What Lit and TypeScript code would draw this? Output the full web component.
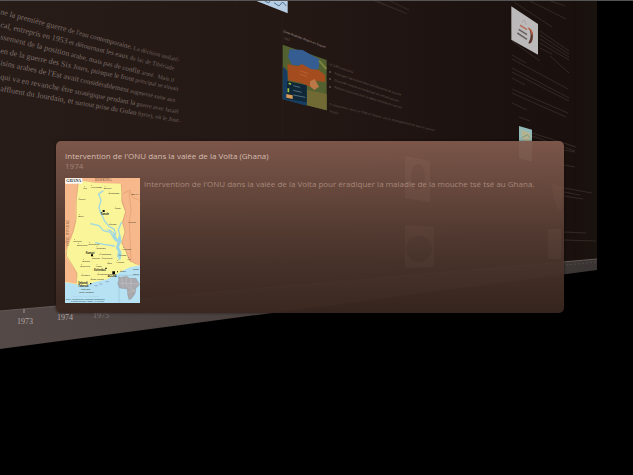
import { LitElement, html, svg, css } from "lit";
import { customElement } from "lit/decorators.js";

/* Article lines on the wall; each line shrinks as it recedes. */
const article: { y: number; angle: number; parts: [string, string, string] }[] = [
  { y: 14, angle: 15, parts: ["ne la première guerre", " de l'eau contemporaine.", " La décision unilaté-"] },
  { y: 27, angle: 14, parts: ["cal, entrepris en 1953", " et détournant les eaux", " du lac de Tibériade"] },
  { y: 39, angle: 14, parts: ["ssement de la position", " arabe, mais pas de conflit", " armé.  Mais il"] },
  { y: 53, angle: 12, parts: ["en de la guerre des Six", " Jours, puisque le front", " principal se situait"] },
  { y: 65, angle: 12, parts: ["isins arabes de l'Est avait", " considérablement", " augmenté suite aux"] },
  { y: 79, angle: 11, parts: ["qui va en revanche être", " stratégique pendant la", " guerre avec Israël"] },
  { y: 91, angle: 10, parts: ["affluent du Jourdain, et", " surtout prise du Golan", " Syrie), où le Jour-"] },
];

/* Small notes further along the wall: x, y, angle, text. */
const notes: [number, number, number, string][] = [
  [329, 65, 19, "Le GAP en Anatolie"],
  [334, 74, 18, "Aménager l'agriculture dans une économie de marché"],
  [334, 81, 18, "Diversifier l'emploi et moderniser les infrastructures"],
  [334, 88, 17, "Réduire la pauvreté dans la région Anatolie du sud-est"],
  [329, 105, 14, "Ce programme, lancé en 1982 en Turquie, vise le développement de tout le sud-est"],
  [329, 112, 14, "Turquie"],
];

/* Lines of text too distant to read: x1, y1, x2, y2. */
const distant: [number, number, number, number][] = [
  [375, 0, 407, 14], [388, 0, 409, 10], [372, 0, 403, 12],
  [514, 2, 552, 27], [528, 0, 566, 19], [548, 0, 565, 6],
  [540, 31, 569, 51], [540, 35, 569, 54], [540, 39, 569, 57], [540, 43, 569, 60],
  [540, 48, 552, 54], [512, 41, 540, 61], [550, 56, 569, 73],
  [512, 55, 526, 63], [512, 59, 568, 89], [512, 68, 569, 98], [512, 72, 569, 101],
  [512, 78, 525, 85], [512, 89, 568, 113], [512, 93, 566, 117], [512, 103, 527, 110],
  [519, 117, 530, 121], [532, 133, 576, 147], [532, 136, 575, 151],
  [564, 143, 575, 147], [564, 150, 575, 152], [564, 165, 575, 167],
  [564, 188, 592, 193], [564, 192, 580, 195], [564, 196, 583, 199],
  [564, 232, 586, 233], [564, 240, 596, 241],
];

/* Place names on the map of Ghana. */
const towns: [number, number, string][] = [
  [72, 50, "Wa"], [94, 47, "Navrongo"], [134, 49, "Bawku"], [148, 66, "Gambaga"],
  [58, 84, "Lawra"], [58, 133, "Bole"], [166, 111, "Yendi"], [150, 159, "Salaga"],
  [42, 209, "Wenchi"], [54, 221, "Berekum"], [88, 218, "Techiman"], [110, 229, "Atebubu"],
  [120, 249, "Mampong"], [126, 261, "Nkawkaw"], [190, 233, "Kpandu"], [204, 262, "Ho"],
  [144, 276, "Oda"], [70, 269, "Bibiani"], [98, 260, "Obuasi"], [64, 284, "Dunkwa"],
  [172, 272, "Hohoe"], [182, 300, "Tema"], [66, 312, "Prestea"], [94, 324, "Cape Coast"],
  [114, 309, "Winneba"], [110, 284, "Kade"], [178, 252, "Anloga"],
];

const ghana = () => svg`
  <svg class="map" viewBox="18 17 225 375" role="img" aria-label="Carte du Ghana">
    <rect x="18" y="17" width="225" height="375" fill="#f7b98b" />
    <path d="M58 36 L74 26 L110 32 L186 34 L190 62 L187 88 L199 118 L190 148 L198 178 L188 212 L199 232 L210 262 L231 275 L243 281 V392 H18 V320 L42 315 L20 262 L18 240 L38 196 L50 150 L50 90 Z" fill="#fbf59a" />
    <path d="M18 330 L44 334 L78 342 L104 330 L145 321 L172 307 L190 295 L213 285 L243 279 V392 H18Z" fill="#b7e2f4" />
    <path d="M18 228 L22 255 L42 283 L54 303 L50 334 L18 328Z" fill="#f7b98b" />
    <path d="M57 36 L52 82 L51 142 L42 180 L26 205 L22 250 L41 280 L54 303 L52 334" fill="none" stroke="#d69a70" stroke-width="2" />
    <path d="M187 35 L189 85 L200 118 L191 150 L198 179 L188 211 L200 234 L211 264 L233 276" fill="none" stroke="#d69a70" stroke-width="2" />
    <path d="M190 65 L213 53 L221 76 L243 84 M210 58 L216 116 L211 148 L216 270" fill="none" stroke="#e29c6d" stroke-width="2" />
    <path d="M133 55 L119 65 L126 84 L120 104 L126 127 M94 154 L120 160 L133 175 L155 180 L164 198 L178 206 L174 229 L186 245 L179 264 M124 116 L136 145 L151 163 L165 170 L171 187 M188 149 L178 172 L185 199 M108 211 L135 216 L167 221" fill="none" stroke="#9fd8e2" stroke-width="4" />
    <path d="M139 171 L160 180 L165 203 L177 211 L170 224 L177 237 L174 253 L185 262 L187 239 L180 224 L188 205 L181 187 L175 201 L167 183 L154 172Z" fill="#9fd8e2" />
    <g class="place">
      ${towns.map(([x, y, t]) => svg`<text x=${x} y=${y}>${t}</text><circle cx=${x + 4} cy=${y - 7} r="1" />`)}
      <text class="city" x="125" y="127">Tamale</text>
      <text class="city" x="80" y="244">Kumasi</text>
      <text class="city" x="146" y="314">ACCRA</text>
      <text class="city" x="105" y="297">Koforidua</text>
      <text class="city" x="58" y="334">Sekondi</text>
      <text class="city" x="58" y="343">Takoradi</text>
      <text x="66" y="353">Cap des</text><text x="60" y="362">Trois Pointes</text>
      <text x="217" y="67">BENIN</text><text x="208" y="152">TOGO</text>
      <text x="221" y="292">Lomé</text><text x="221" y="309">Golfe</text>
    </g>
    <path d="M131 113h6v6h-6z M96 246h6v6h-6z M160 297h8v8h-8z M139 286h4v4h-4z M93 332h4v4h-4z M174 297h3v3h-3z" />
    <path d="M178 314 L185 315 L203 312 L212 318 L231 318 L242 337 L231 347 L228 364 L217 379 L210 382 L206 367 L205 350 L182 347 L176 334 L180 322Z" fill="#aaa9ad" stroke="#858991" />
    <path d="M188 314 L192 346 M202 312 L201 337 L213 347 M215 318 L217 350 L228 359 M179 332 L241 335 M206 362 L228 352" fill="none" stroke="#d4d4d4" />
    <path d="M180 392 V309 H243" fill="none" stroke="#80aabc" />
    <path d="M106 340h10 M121 335h9 M140 328h10" stroke="#547" />
    <rect x="19" y="18" width="51" height="16" fill="#fff" />
    <text class="name" x="22" y="30">GHANA</text>
    <text class="country" x="108" y="27">BURKINA</text>
    <text class="country" transform="translate(29 221) rotate(-90)">CÔTE D'IVOIRE</text>
    <text class="sea" x="42" y="373">OCÉAN ATLANTIQUE</text>
    <text class="foot" x="20" y="382">Source : Département de l'information cartographique</text>
    <text class="foot" x="35" y="389">Le monde des cartes : Ghana — 1:4 000 000</text>
  </svg>`;

@customElement("wall-scene")
class WallScene extends LitElement {
  static styles = css`
    :host { display: block; }
    .scene { display: block; width: 100%; height: 100%; }
    .article { font: 8px "Liberation Serif", serif; fill: #7d6f69; white-space: pre; }
    .mid { font-size: 7px; }
    .far { font-size: 6px; fill: #71645e; }
    .heading { font: 3px Lato, sans-serif; fill: #a89c96; }
    .note { font: 3px Lato, sans-serif; fill: #62554f; }
    .distant { stroke: #332824; stroke-width: 1; }
    .year { font: 8px "Liberation Serif", serif; fill: #b5aaa7; }
  `;

  render() {
    return html`
      <svg class="scene" viewBox="0 0 633 475" preserveAspectRatio="xMinYMin slice">
        <defs>
          <linearGradient id="wall">
            <stop offset="0" stop-color="#281c18" />
            <stop offset=".5" stop-color="#241815" />
            <stop offset=".85" stop-color="#1b110f" />
            <stop offset=".96" stop-color="#1a110e" />
            <stop offset="1" stop-color="#19120d" />
          </linearGradient>
          <linearGradient id="ledge">
            <stop offset="0" stop-color="#544947" />
            <stop offset="1" stop-color="#3a3432" />
          </linearGradient>
        </defs>
        <path d="M0 0H597V259L0 311Z" fill="url(#wall)" />
        <path d="M237 0V290 M282 0V286" stroke="#281d19" />
        <path d="M575 0V261" stroke="#17100d" />
        <path d="M0 311L597 259V270L0 349Z" fill="url(#ledge)" />
        <path d="M0 311L597 259" stroke="#645a57" />

        ${article.map(({ y, angle, parts }) => svg`
          <text class="article" transform="translate(0 ${y}) rotate(${angle})">${parts[0]}<tspan class="mid">${parts[1]}</tspan><tspan class="far">${parts[2]}</tspan></text>`)}

        <g transform="translate(210) scale(.33333)">
          <path d="M132 0H233V40Z" fill="#b7cde4" />
          <path d="M160 0L176 9L182 0M192 8L207 18L218 6L229 18" fill="none" stroke="#4d7191" stroke-width="3" />
          <path d="M218 134L350 180V331L218 298Z" fill="#52612f" />
          <path d="M239 148L278 150L330 179L325 207L303 212L276 197L246 195L234 170Z" fill="#355d91" />
          <path d="M219 200L232 212L233 245L290 258V317L218 298Z" fill="#173c61" />
          <path d="M232 192L263 199L276 192L302 207L326 210L345 225L346 246L318 243L307 263L274 249L235 241Z" fill="#a44c1d" />
          <path d="M300 244L314 237L327 260L313 270L300 259Z" fill="#ba7849" />
          <path d="M291 269L350 282V331L291 316Z" fill="#716a35" />
          <path d="M327 182L349 207" stroke="#7b813f" stroke-width="6" />
          <path d="M231 243L290 256V306L231 297Z" fill="#102738" />
          <path d="M236 250l7 3M235 265v12" stroke="#a6c541" stroke-width="5" />
          <path d="M250 257l20 5M250 271l25 6M250 285l36 7" stroke="#4f6c78" stroke-width="3" />
          <path d="M229 282L248 286V297L229 293Z" fill="#d99a58" />
          <path d="M271 212l24 9M270 222l20 8" stroke="#c06a3a" stroke-width="2" />
        </g>
        <text class="heading" transform="translate(283 32) rotate(21)">Great Anatolian Project en Turquie</text>
        <text class="note" transform="translate(283 39) rotate(18)">1982</text>
        ${notes.map(([x, y, a, t]) => svg`<text class="note" transform="translate(${x} ${y}) rotate(${a})">${t}</text>`)}
        <path d="M330 71v2M330 78v2M330 86v2" stroke="#7b6c65" />

        <g class="distant">
          ${distant.map(([x1, y1, x2, y2]) => svg`<line x1=${x1} y1=${y1} x2=${x2} y2=${y2} />`)}
        </g>
        <g transform="translate(430) scale(.33333)">
          <path d="M244 19L324 72V164L244 119Z" fill="#bbb9b9" />
          <path d="M277 68q5-20 11 6" fill="none" stroke="#a89998" stroke-width="2" />
          <path d="M270 76L291 89" stroke="#b5725f" stroke-width="5" />
          <path d="M266 88L291 104M262 99L291 118" stroke="#6b6361" stroke-width="5" />
          <path d="M295 83Q313 92 308 118Q304 134 295 130Q302 119 302 105Q302 92 295 83Z" fill="#5b342c" />
          <path d="M295 84Q307 91 306 104" fill="none" stroke="#c05d42" stroke-width="4" />
          <path d="M267 378L306 389V485L267 475Z" fill="#91b9b7" />
          <path d="M273 390l20 5 11 12-8 18-20-7z" fill="#b4b391" />
          <path d="M274 414l18-10 8 10" fill="none" stroke="#82987e" stroke-width="3" />
        </g>

        <path d="M405 156L430 161V202L405 198Z" fill="#a88b7e" />
        <ellipse cx="418" cy="177" rx="7" ry="13" fill="#3a2420" />
        <path d="M405 225L434 227V267L405 268Z" fill="#8b796d" />
        <circle cx="419" cy="249" r="13" fill="#28221e" />
        <path d="M548 229H561V259H548Z" fill="#8f7e74" />
        <path d="M551 183L562 187V211L557 208Z" fill="#715a4e" />

        <path d="M24 309v4" stroke="#a69a97" />
        <text class="year" x="17" y="324">1973</text>
        <text class="year" x="57" y="320">1974</text>
        <text class="year" x="93" y="318" opacity=".5">1975</text>
        <path d="M566 265L597 262" stroke="#504947" stroke-dasharray="2 2" />
        <path d="M0 0H633" stroke="#555" stroke-width="2" />
      </svg>
    `;
  }
}

@customElement("app-root")
class AppRoot extends LitElement {
  static styles = css`
    :host {
      display: block;
      position: relative;
      min-height: 100vh;
      overflow: hidden;
      background: #000;
      font-family: "Open Sans", "Noto Sans", sans-serif;
    }
    .backdrop { position: absolute; inset: 0; }
    .page { position: relative; padding: 141px 69px 0 56px; }
    .card {
      padding: 10px 9px;
      border-radius: 5px;
      background: linear-gradient(#80594cf2, #68493ef2 30%, #4f382ff2 60%, #38261ff2);
      box-shadow: 0 0 3px #0008;
    }
    .title, .date, .text { margin: 0; font-size: 8px; line-height: 10px; font-weight: 400; }
    .title { color: #d5bcb0; }
    .date { color: #a18478; }
    .content { display: flex; gap: 4px; margin-top: 7px; }
    .map { flex: none; width: 75px; height: 125px; }
    .text { color: #a68779; padding-top: 1px; }
    .place { font: 8px Lato, sans-serif; fill: #3c3a28; }
    .city { font-weight: 700; fill: #111; }
    .name { font: bold 12px "Liberation Serif", serif; fill: #222; }
    .country { font: 11px "Liberation Serif", serif; fill: #7b5137; }
    .sea { font: 8px "Liberation Serif", serif; fill: #8dbfd6; }
    .foot { font: 5px "Liberation Sans", sans-serif; fill: #173b4b; }
  `;

  render() {
    return html`
      <wall-scene class="backdrop"></wall-scene>
      <main class="page">
        <article class="card">
          <h1 class="title">Intervention de l'ONU dans la valée de la Volta (Ghana)</h1>
          <p class="date">1974</p>
          <div class="content">
            ${html`${ghana()}`}
            <p class="text">Intervention de l'ONU dans la valée de la Volta pour éradiquer la maladie de la mouche tsé tsé au Ghana.</p>
          </div>
        </article>
      </main>
    `;
  }
}
